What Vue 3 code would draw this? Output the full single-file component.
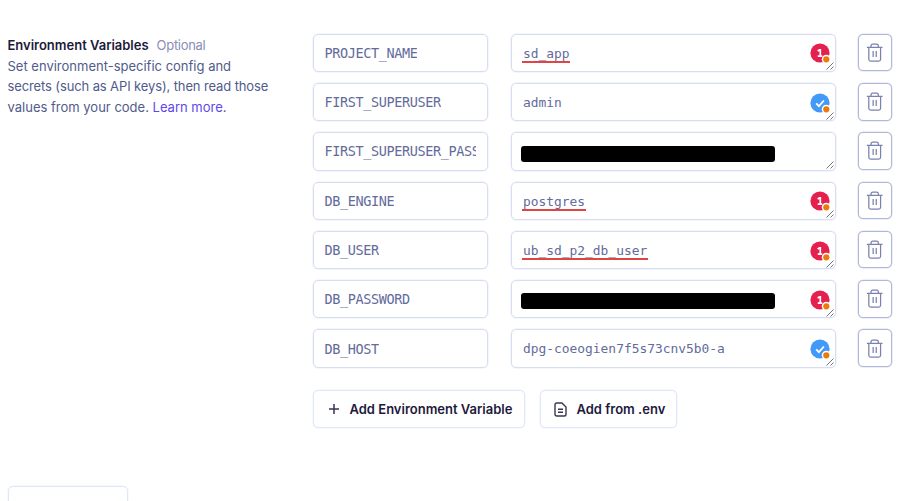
<script setup>
const rows = [
  { name: 'PROJECT_NAME', value: 'sd_app', flagged: true, badge: 'error' },
  { name: 'FIRST_SUPERUSER', value: 'admin', badge: 'ok' },
  { name: 'FIRST_SUPERUSER_PASSWORD', redacted: true },
  { name: 'DB_ENGINE', value: 'postgres', flagged: true, badge: 'error' },
  { name: 'DB_USER', value: 'ub_sd_p2_db_user', flagged: true, badge: 'error' },
  { name: 'DB_PASSWORD', redacted: true, badge: 'error' },
  { name: 'DB_HOST', value: 'dpg-coeogien7f5s73cnv5b0-a', badge: 'ok' },
]
</script>

<template>
  <main class="page">
    <div class="section">
      <div class="intro">
        <div class="heading"><span class="title">Environment Variables</span><span class="optional">Optional</span></div>
        <p class="desc">
          <span class="line">Set environment-specific config and</span>
          <span class="line tight">secrets (such as API keys), then read those</span>
          <span class="line">values from your code. <a class="link">Learn more</a>.</span>
        </p>
      </div>
      <div class="form">
        <div class="rows">
          <div v-for="row in rows" :key="row.name" class="row">
            <div class="field name"><span class="clip">{{ row.name }}</span></div>
            <div class="field value">
              <span v-if="row.redacted" class="redacted" :class="{ low: !row.badge }"></span>
              <span v-else class="text" :class="{ flagged: row.flagged }">{{ row.value }}</span>
              <svg v-if="row.badge" class="badge" viewBox="0 0 22 22">
                <circle cx="10" cy="10" r="9.6" :fill="row.badge === 'ok' ? '#4299f7' : '#e5204f'" />
                <path v-if="row.badge === 'ok'" d="M6.2 10.3l2.7 2.8 5-5.6" fill="none" stroke="#fff" stroke-width="1.8" />
                <path v-else d="M7.6 8.1l2-1.2h.7v6.3M7.7 13.2h4.6" fill="none" stroke="#fff" stroke-width="1.7" />
                <circle cx="16.3" cy="16.3" r="4.5" fill="#fff" />
                <circle cx="16.3" cy="16.3" r="3.1" fill="#ec7a08" />
              </svg>
              <svg class="grip" viewBox="0 0 8 8"><path d="M.5 7.5l7-7M4.5 7.5l3-3" stroke="#777" stroke-width="1" fill="none" /></svg>
            </div>
            <button class="trash" aria-label="Delete">
              <svg viewBox="0 0 18 20" fill="none" stroke="#7a82ae" stroke-width="1.3">
                <path d="M.9 4.5h16.2M5.2 4.4V3.1Q5.2 1.2 7.1 1.2h3.8q1.9 0 1.9 1.9v1.3M2.9 4.7v12.2q0 1.9 1.9 1.9h8.4q1.9 0 1.9-1.9V4.7" />
                <path d="M7.4 8.2v6.2M10.6 8.2v6.2" />
              </svg>
            </button>
          </div>
        </div>
        <div class="actions">
          <button class="action add">
            <svg class="plus" viewBox="0 0 12 12"><path d="M6 1v10M1 6h10" stroke="#3b3555" stroke-width="1.5" /></svg>
            <span>Add Environment Variable</span>
          </button>
          <button class="action env">
            <svg class="doc" viewBox="0 0 13 15" fill="none" stroke="#3b3555" stroke-width="1.4">
              <path d="M2.8 1h5.1L12 5v7.2q0 1.8-1.8 1.8H2.8Q1 14 1 12.2V2.8Q1 1 2.8 1zM4 7.3h5M4 10.3h5" />
            </svg>
            <span>Add from .env</span>
          </button>
        </div>
      </div>
    </div>
    <div class="next"></div>
  </main>
</template>

<style>
body {
  margin: 0;
  background: #fff;
}
</style>

<style scoped>
.page {
  box-sizing: border-box;
  width: 908px;
  height: 501px;
  overflow: hidden;
  padding: 33.7px 0 0 7.5px;
  font-family: Inter, sans-serif;
  font-size: 13px;
}
.section {
  display: flex;
  height: 452.3px;
}
.intro {
  width: 305px;
  flex: none;
}
.heading {
  display: flex;
  align-items: baseline;
  gap: 8px;
  padding-top: 1.3px;
  line-height: 21px;
  white-space: nowrap;
}
.title {
  font-weight: 600;
  color: #1d1a3c;
  letter-spacing: -0.01px;
}
.optional {
  color: #8a8eb8;
  letter-spacing: -0.3px;
}
.desc {
  margin: 0;
  color: #515b8b;
  line-height: 20.3px;
}
.line {
  display: block;
  white-space: nowrap;
}
.tight {
  letter-spacing: -0.12px;
}
.link {
  color: #5c49ee;
}
.rows {
  display: grid;
  gap: 11px;
}
.row {
  display: flex;
  height: 38.3px;
}
.field {
  box-sizing: border-box;
  display: flex;
  align-items: center;
  border: 1px solid #d7def3;
  border-radius: 5px;
  box-shadow: 0 0 0 0.5px #e9edf9;
  font-family: "DejaVu Sans Mono", monospace;
  font-size: 13.5px;
  letter-spacing: -0.38px;
  color: #636b9b;
}
.name {
  width: 175.5px;
  padding: 0 11px;
}
.clip {
  overflow: hidden;
  white-space: nowrap;
  line-height: 20px;
}
.value {
  position: relative;
  width: 325px;
  margin-left: 23px;
  padding-left: 10px;
  font-size: 12.9px;
  letter-spacing: 0;
}
.text {
  padding: 2px 0.5px 0 1px;
  line-height: 17px;
  border-bottom: 2px solid transparent;
}
.flagged {
  margin-top: 1px;
  padding-top: 3px;
  line-height: 14px;
  border-bottom-color: #e04545;
}
.redacted {
  width: 254px;
  height: 16px;
  margin-left: -1px;
  margin-top: 3px;
  border-radius: 3px;
  background: #000;
}
.low {
  margin-top: 6px;
}
.badge {
  position: absolute;
  right: 3.5px;
  bottom: 5.5px;
  width: 22px;
  height: 22px;
}
.grip {
  position: absolute;
  right: 1px;
  bottom: 0.5px;
  width: 8px;
  height: 8px;
}
.trash {
  box-sizing: border-box;
  display: flex;
  align-items: center;
  justify-content: center;
  width: 34px;
  height: 37.6px;
  margin: 0 0 0 22px;
  padding: 0;
  border: 1px solid #b0b7d8;
  border-radius: 5px;
  box-shadow: 0 0 0 0.5px #d9ddee;
  background: #fff;
}
.trash svg {
  width: 17.4px;
  height: 19.4px;
}
.actions {
  display: flex;
  gap: 15px;
  margin-top: 22.5px;
}
.action {
  box-sizing: border-box;
  display: flex;
  align-items: center;
  height: 38px;
  padding: 0 0 0 14px;
  border: 1px solid #dfe7fb;
  border-radius: 5px;
  box-shadow: 0 0 0 0.5px #eff3fd;
  background: #fff;
  font-family: inherit;
  font-size: 13px;
  font-weight: 600;
  color: #1d1a3c;
  white-space: nowrap;
}
.add {
  width: 212px;
}
.env {
  width: 137px;
  padding-left: 13px;
}
.plus {
  width: 12px;
  height: 12px;
  margin-right: 10px;
}
.doc {
  width: 13px;
  height: 15px;
  margin-right: 10px;
}
.next {
  box-sizing: border-box;
  width: 120px;
  height: 38px;
  border: 1px solid #dfe7fb;
  border-radius: 5px;
  box-shadow: 0 0 0 0.5px #eff3fd;
}
</style>
